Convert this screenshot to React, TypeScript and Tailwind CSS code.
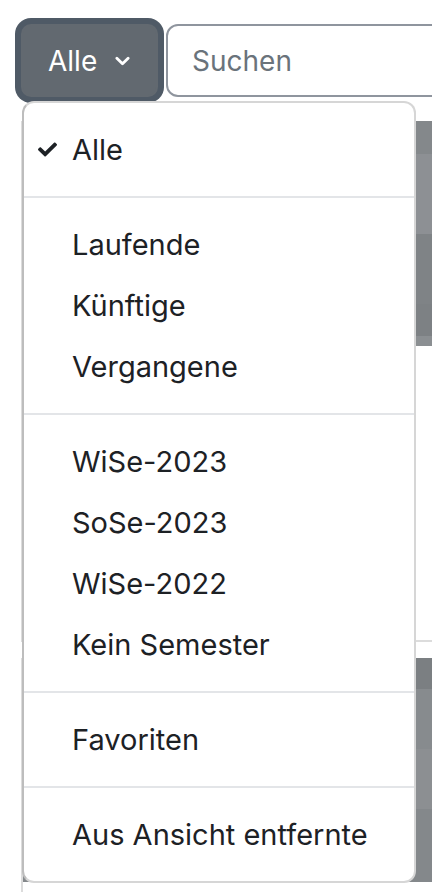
import React from "react";

function Check() {
  return (
    <svg viewBox="0 0 512 512" className="w-[19px] h-[19px]" fill="#1d2125">
      <path d="M173.898 439.404l-166.4-166.4c-9.997-9.997-9.997-26.206 0-36.204l36.203-36.204c9.997-9.998 26.207-9.998 36.204 0L192 312.69 432.095 72.596c9.997-9.997 26.207-9.997 36.204 0l36.203 36.204c9.997 9.997 9.997 26.206 0 36.204l-294.4 294.401c-9.998 9.997-26.207 9.997-36.204-.001z" />
    </svg>
  );
}

function Item({ label, checked }: { label: string; checked?: boolean }) {
  return (
    <div className="relative h-[61px] flex items-center pl-[48px] text-[#1d2125]">
      {checked && (
        <span className="absolute left-[14px] top-[21px]">
          <Check />
        </span>
      )}
      {label}
    </div>
  );
}

function Divider() {
  return <div className="my-[16px] h-[2px] bg-[#e3e5e8]" />;
}

export default function App() {
  return (
    <div
      className="relative w-[432px] h-[892px] overflow-hidden bg-white"
      style={{ fontFamily: "Inter, 'Noto Sans', sans-serif" }}
    >
      <div className="flex items-center gap-[8px] pl-[21px] pt-[24px]">
        <button className="shrink-0 w-[137px] h-[73px] rounded-[10px] bg-[#626970] border-2 border-[#626970] shadow-[0_0_0_6px_#4f5a66] flex items-center pl-[25px] gap-[18px] text-white text-[28px]">
          <span>Alle</span>
          <svg viewBox="0 0 16 10" className="w-[15px] h-[10px]" fill="none" stroke="white" strokeWidth="3" strokeLinecap="round" strokeLinejoin="round">
            <polyline points="2,2 8,8 14,2" />
          </svg>
        </button>
        <div className="shrink-0 w-[300px] h-[73px] rounded-[12px] border-2 border-[#8f959e] flex items-center pl-[24px] text-[28px] text-[#6a737b]">
          Suchen
        </div>
      </div>

      {/* cards behind */}
      <div className="ml-[21px] mt-[24px] w-[480px] flex flex-col">
        <div className="border-l-2 border-b-2 border-[#dcdcdc] h-[521px] flex flex-col">
          <div className="h-[225px] bg-[#818588] flex">
            <div className="flex-1 flex flex-col">
              <div className="h-[33px] bg-[#84888b]" />
              <div className="h-[80px] bg-[#8d9094]" />
              <div className="h-[70px] bg-[#7f8386]" />
              <div className="h-[32px] bg-[#7d8184]" />
              <div className="flex-1 bg-[#8b8f92]" />
            </div>
          </div>
        </div>
        <div className="mt-[16px] border-l-2 border-[#dcdcdc] h-[260px] flex flex-col">
          <div className="h-[224px] flex flex-col">
            <div className="h-[31px] bg-[#7b7f82]" />
            <div className="h-[60px] bg-[#878b8e]" />
            <div className="h-[60px] bg-[#8c8f92]" />
            <div className="flex-1 bg-[#84888b]" />
          </div>
        </div>
      </div>

      {/* dropdown menu */}
      <div className="absolute left-[22px] top-[101px] w-[394px] rounded-[12px] border-2 border-[#d6d6d6] border-l-[#bdbdbd] bg-white py-[16px] text-[29px] leading-[45px]">
        <Item label="Alle" checked />
        <Divider />
        <Item label="Laufende" />
        <Item label="Künftige" />
        <Item label="Vergangene" />
        <Divider />
        <Item label="WiSe-2023" />
        <Item label="SoSe-2023" />
        <Item label="WiSe-2022" />
        <Item label="Kein Semester" />
        <Divider />
        <Item label="Favoriten" />
        <Divider />
        <Item label="Aus Ansicht entfernte" />
      </div>
    </div>
  );
}
